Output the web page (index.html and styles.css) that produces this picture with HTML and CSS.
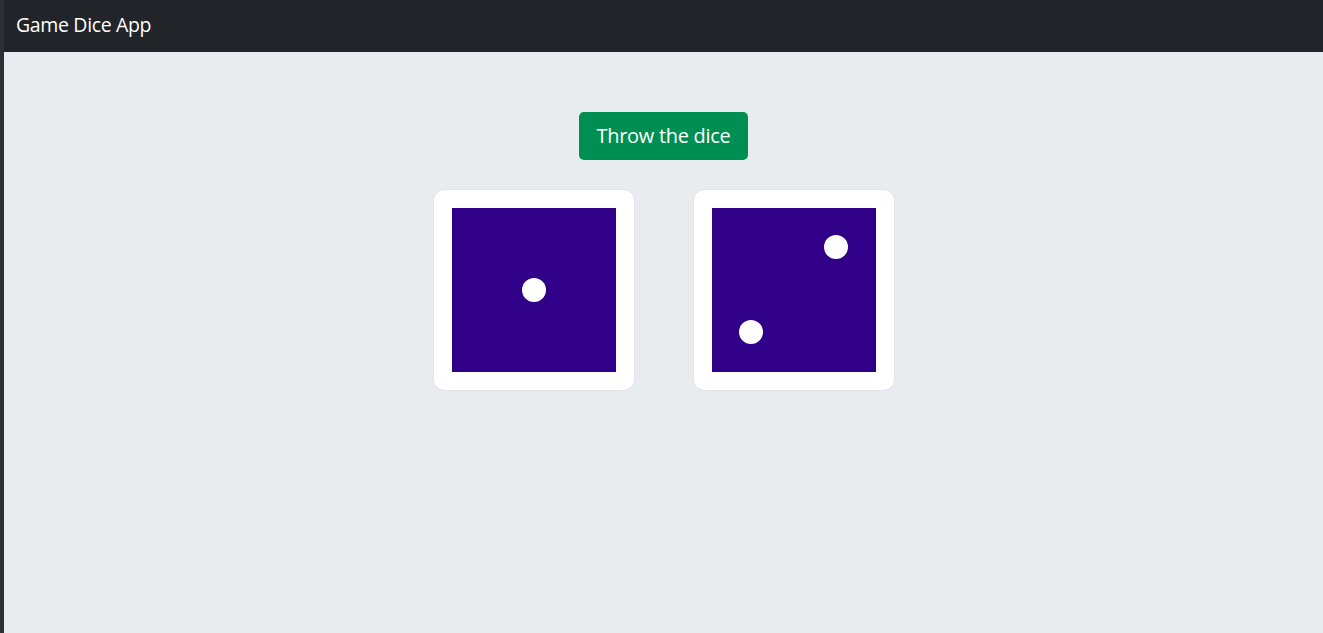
FILE: index.html
```html
<!DOCTYPE html>
<html lang="en">
<head>
<meta charset="utf-8">
<title>Game Dice App</title>
<link rel="stylesheet" href="styles.css">
</head>
<body>
<div class="app">
  <nav class="navbar"><span class="brand">Game Dice App</span></nav>
  <main class="main">
    <button class="btn">Throw the dice</button>
    <div class="dice">
      <div class="die"><div class="face">
        <span class="pip" style="left:82px;top:82px"></span>
      </div></div>
      <div class="die"><div class="face">
        <span class="pip" style="left:124px;top:39px"></span>
        <span class="pip" style="left:39px;top:124px"></span>
      </div></div>
    </div>
  </main>
</div>
</body>
</html>
```
FILE: styles.css
```css
html, body { margin: 0; height: 100%; }
body {
  background: #2b3035;
  font-family: "Open Sans", "Noto Sans", sans-serif;
}
.app {
  margin-left: 4px;
  min-height: 100%;
  background: #e9ecef;
  display: flex;
  flex-direction: column;
}
.navbar {
  height: 52px;
  background: #212529;
  display: flex;
  align-items: center;
  padding-left: 12px;
}
.brand {
  color: #fff;
  font-size: 19.5px;
  letter-spacing: -0.35px;
  margin-top: -3px;
}
.main {
  display: flex;
  flex-direction: column;
  align-items: center;
  padding-top: 60px;
  gap: 30px;
}
.btn {
  width: 169px;
  height: 48px;
  background: #008f52;
  color: #fff;
  border: none;
  border-radius: 5px;
  font-family: inherit;
  font-size: 20px;
  letter-spacing: -0.3px;
  padding: 0 0 2px;
}
.dice {
  display: flex;
  gap: 60px;
}
.die {
  width: 200px;
  height: 200px;
  box-sizing: border-box;
  background: #fff;
  border-radius: 10px;
  padding: 18px;
  box-shadow: 0 0 0 0.5px rgba(200, 190, 235, 0.35);
}
.face {
  position: relative;
  width: 164px;
  height: 164px;
  background: #310088;
}
.pip {
  position: absolute;
  width: 24px;
  height: 24px;
  margin: -12px 0 0 -12px;
  border-radius: 50%;
  background: #fff;
}
```
